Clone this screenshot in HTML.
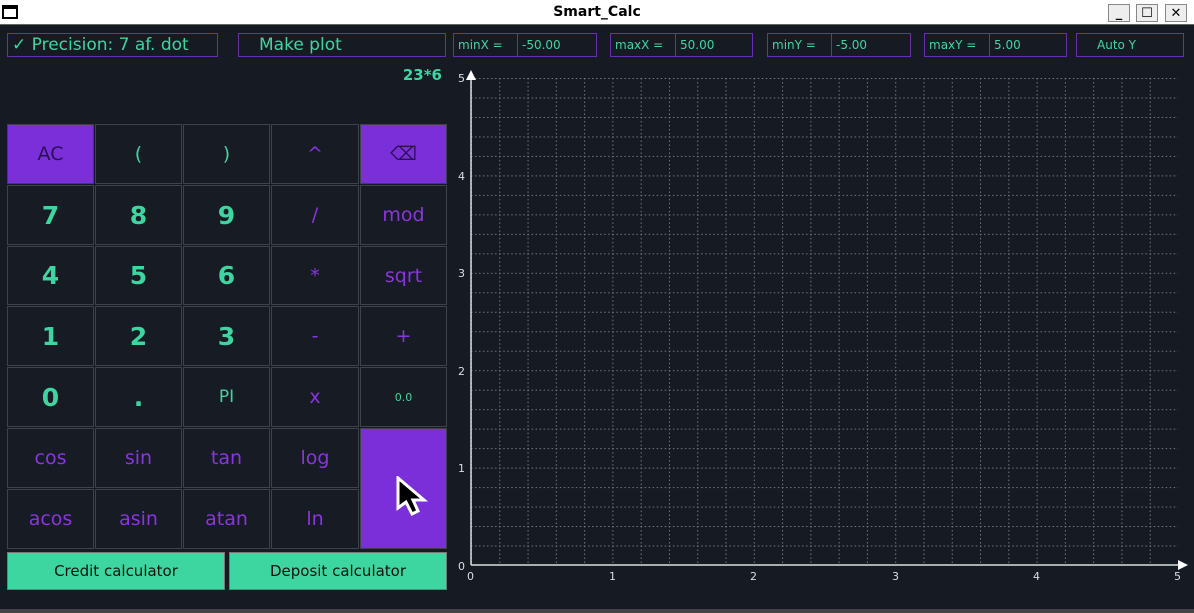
<html><head><style>
body{margin:0;width:1194px;height:613px;background:#151a23;position:relative;overflow:hidden;font-family:"DejaVu Sans","Liberation Sans",sans-serif}
.a{position:absolute;box-sizing:border-box}
.t{left:0;top:0;width:1194px;height:25px;background:#fff;border-bottom:1px solid #666}
.b{border:1px solid #3d424b;background:#161b24;display:flex;align-items:center;justify-content:center;font-size:19px;color:#8a35e0}
.g{color:#3ed6a0;font-weight:bold;font-size:25px}
.p{background:#7b2fd9;color:#2a0f55}
.f{border:1px solid #6a2fb0;color:#3ed6a0;font-size:12px;display:flex;align-items:center;padding-left:4px}
.wb{width:22px;height:18px;top:4px;border:1px solid #888;background:#eee;font-size:13px;text-align:center;line-height:17px;font-weight:bold}
</style></head><body>
<div class="a t"></div>
<div class="a" style="left:2px;top:5px;width:16px;height:14px;border:2px solid #000;border-top-width:4px"></div>
<div class="a" style="left:0;width:1194px;top:4px;text-align:center;font-weight:bold;font-size:14px">Smart_Calc</div>
<div class="a wb" style="left:1108px">_</div><div class="a wb" style="left:1136px">☐</div><div class="a wb" style="left:1165px">✕</div>
<div class="a f" style="left:7px;top:33px;width:211px;height:24px;font-size:17px">✓ Precision: 7 af. dot</div>
<div class="a f" style="left:238px;top:33px;width:208px;height:24px;font-size:17px;padding-left:20px">Make plot</div>
<div class="a f" style="left:453px;top:33px;width:65px;height:24px">minX =</div><div class="a f" style="left:517px;top:33px;width:80px;height:24px">-50.00</div>
<div class="a f" style="left:610px;top:33px;width:66px;height:24px">maxX =</div><div class="a f" style="left:675px;top:33px;width:78px;height:24px">50.00</div>
<div class="a f" style="left:767px;top:33px;width:65px;height:24px">minY =</div><div class="a f" style="left:831px;top:33px;width:80px;height:24px">-5.00</div>
<div class="a f" style="left:924px;top:33px;width:66px;height:24px">maxY =</div><div class="a f" style="left:989px;top:33px;width:78px;height:24px">5.00</div>
<div class="a f" style="left:1076px;top:33px;width:108px;height:24px;padding-left:20px">Auto Y</div>
<div class="a" style="left:380px;top:66px;width:62px;text-align:right;color:#3ed6a0;font-weight:bold;font-size:15px">23*6</div>

<div class="a b p" style="left:7px;top:124px;width:87px;height:60px">AC</div>
<div class="a b" style="left:95px;top:124px;width:87px;height:60px;color:#3ed6a0">(</div>
<div class="a b" style="left:183px;top:124px;width:87px;height:60px;color:#3ed6a0">)</div>
<div class="a b" style="left:271px;top:124px;width:88px;height:60px">^</div>
<div class="a b p" style="left:360px;top:124px;width:87px;height:60px">⌫</div>

<div class="a b g" style="left:7px;top:185px;width:87px;height:60px">7</div>
<div class="a b g" style="left:95px;top:185px;width:87px;height:60px">8</div>
<div class="a b g" style="left:183px;top:185px;width:87px;height:60px">9</div>
<div class="a b" style="left:271px;top:185px;width:88px;height:60px">/</div>
<div class="a b" style="left:360px;top:185px;width:87px;height:60px">mod</div>

<div class="a b g" style="left:7px;top:246px;width:87px;height:59px">4</div>
<div class="a b g" style="left:95px;top:246px;width:87px;height:59px">5</div>
<div class="a b g" style="left:183px;top:246px;width:87px;height:59px">6</div>
<div class="a b" style="left:271px;top:246px;width:88px;height:59px">*</div>
<div class="a b" style="left:360px;top:246px;width:87px;height:59px">sqrt</div>

<div class="a b g" style="left:7px;top:306px;width:87px;height:60px">1</div>
<div class="a b g" style="left:95px;top:306px;width:87px;height:60px">2</div>
<div class="a b g" style="left:183px;top:306px;width:87px;height:60px">3</div>
<div class="a b" style="left:271px;top:306px;width:88px;height:60px">-</div>
<div class="a b" style="left:360px;top:306px;width:87px;height:60px">+</div>

<div class="a b g" style="left:7px;top:367px;width:87px;height:60px">0</div>
<div class="a b g" style="left:95px;top:367px;width:87px;height:60px">.</div>
<div class="a b" style="left:183px;top:367px;width:87px;height:60px;color:#3ed6a0;font-size:17px">PI</div>
<div class="a b" style="left:271px;top:367px;width:88px;height:60px">x</div>
<div class="a b" style="left:360px;top:367px;width:87px;height:60px;color:#3ed6a0;font-size:11px">0.0</div>

<div class="a b" style="left:7px;top:428px;width:87px;height:60px">cos</div>
<div class="a b" style="left:95px;top:428px;width:87px;height:60px">sin</div>
<div class="a b" style="left:183px;top:428px;width:87px;height:60px">tan</div>
<div class="a b" style="left:271px;top:428px;width:88px;height:60px">log</div>
<div class="a b p" style="left:360px;top:428px;width:87px;height:121px"></div>

<div class="a b" style="left:7px;top:489px;width:87px;height:60px">acos</div>
<div class="a b" style="left:95px;top:489px;width:87px;height:60px">asin</div>
<div class="a b" style="left:183px;top:489px;width:87px;height:60px">atan</div>
<div class="a b" style="left:271px;top:489px;width:88px;height:60px">ln</div>
<svg class="a" style="left:396px;top:476px" width="48" height="48" viewBox="0 0 48 48"><path d="M2 2 L2 32 L10 26 L16 38 L22 35 L17 24 L28 24 Z" fill="#000" stroke="#fff" stroke-width="3"/></svg>

<div class="a" style="left:7px;top:552px;width:218px;height:38px;background:#3ed6a0;border:1px solid #777;display:flex;align-items:center;justify-content:center;font-size:15px;color:#111">Credit calculator</div>
<div class="a" style="left:229px;top:552px;width:218px;height:38px;background:#3ed6a0;border:1px solid #777;display:flex;align-items:center;justify-content:center;font-size:15px;color:#111">Deposit calculator</div>
<div class="a" style="left:0;top:609px;width:1194px;height:4px;background:#444"></div>

<svg class="a" style="left:0;top:0" width="1194" height="613">
<defs><pattern id="gr" x="471" y="78" width="28.28" height="19.48" patternUnits="userSpaceOnUse">
<path d="M0.5 0V19.48M0 0.5H28.28" stroke="#9aa0a8" stroke-width="1" stroke-dasharray="1.5 2.5" fill="none" opacity=".7"/></pattern></defs>
<rect x="471" y="78" width="707" height="487" fill="url(#gr)"/>
<g stroke="#ddd" stroke-width="1.5" fill="none"><path d="M471 565V76M471 565H1180"/></g>
<path d="M466 80 L471 70 L476 80Z M1178 560 L1188 565 L1178 570Z" fill="#fff"/>
<g fill="#ddd" font-size="11" font-family="DejaVu Sans">
<text x="458" y="82">5</text><text x="458" y="180">4</text><text x="458" y="277">3</text><text x="458" y="375">2</text><text x="458" y="472">1</text><text x="458" y="570">0</text>
<text x="467" y="580">0</text><text x="609" y="580">1</text><text x="750" y="580">2</text><text x="892" y="580">3</text><text x="1033" y="580">4</text><text x="1174" y="580">5</text></g>
</svg>
</body></html>
